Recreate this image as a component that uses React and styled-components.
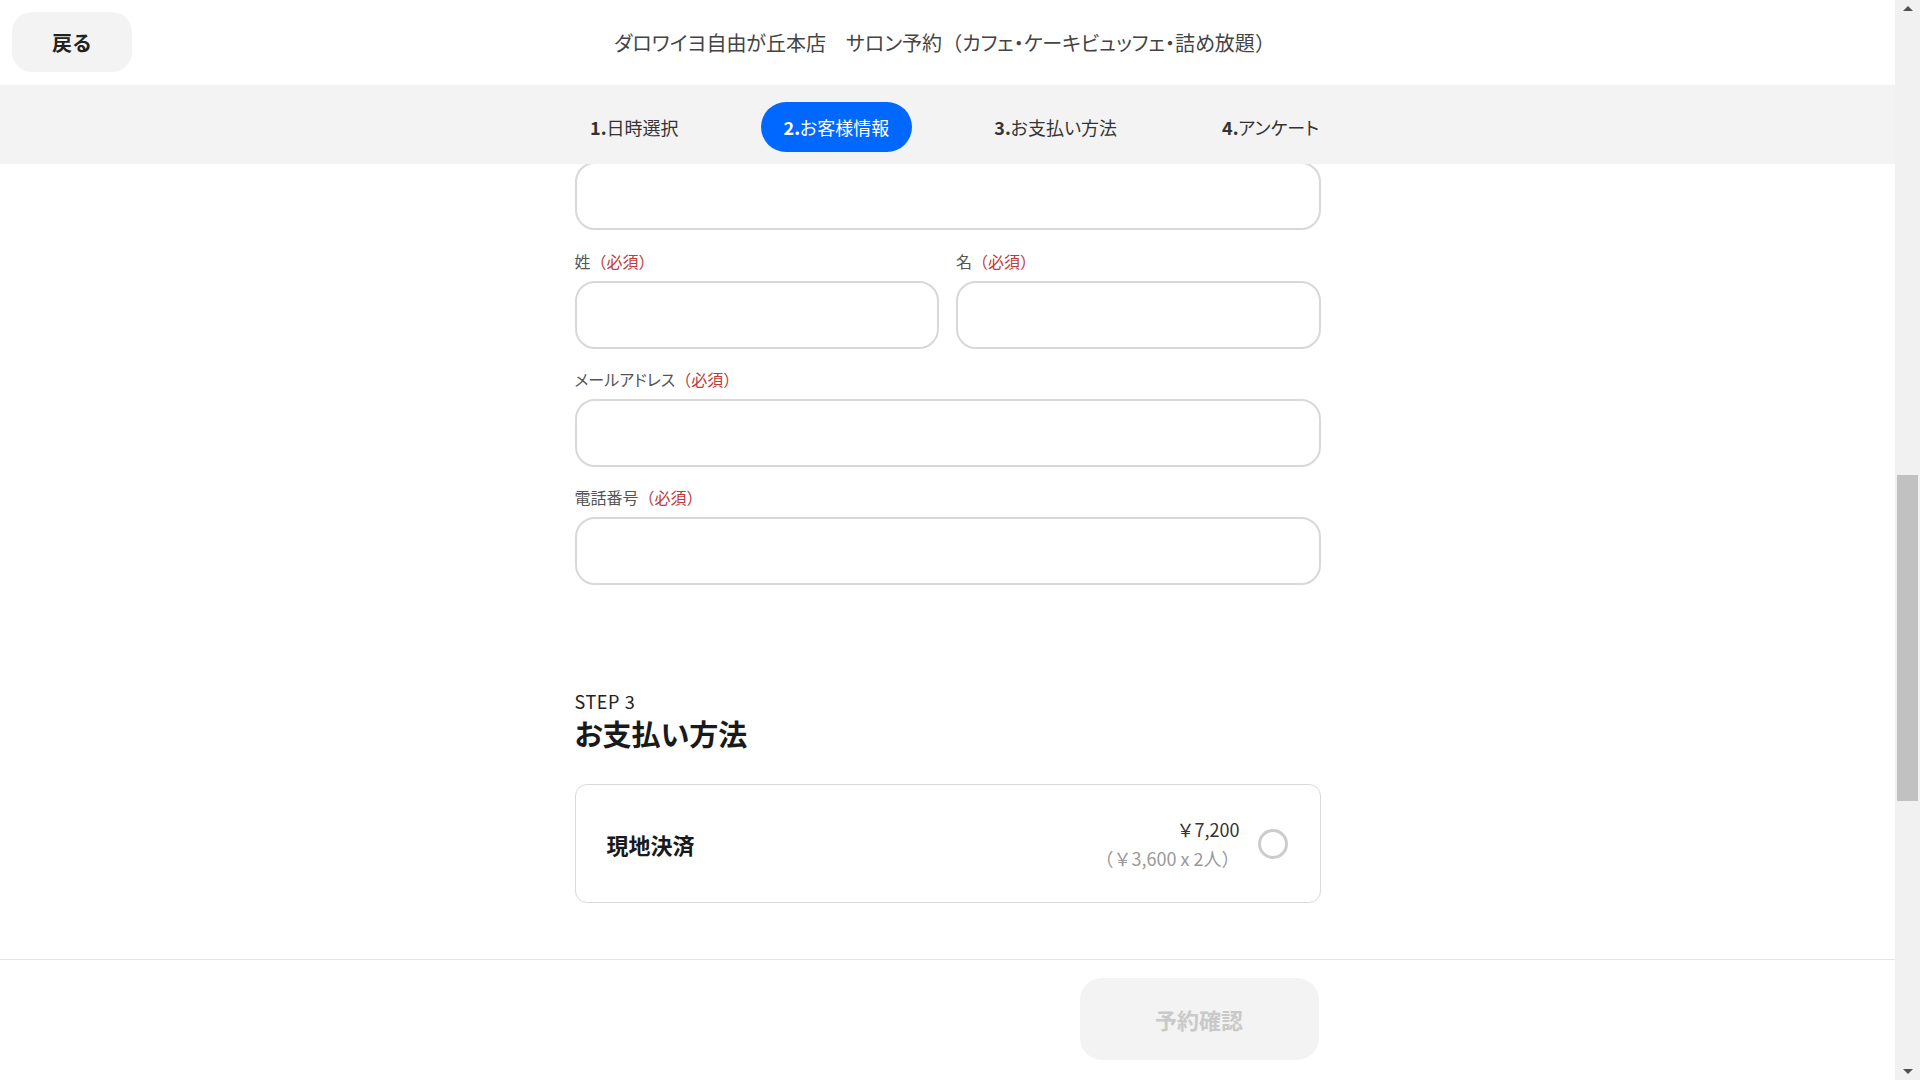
import React from "react";
import styled, { createGlobalStyle } from "styled-components";

const GlobalStyle = createGlobalStyle`
body {
  margin: 0;
  background: #fff;
  color: #333;
  font-family: "Noto Sans CJK JP", "Noto Sans", sans-serif;
  font-feature-settings: "palt";
}
* {
  box-sizing: border-box;
}
`;

const steps = [
  { no: "1.", label: "日時選択" },
  { no: "2.", label: "お客様情報", active: true },
  { no: "3.", label: "お支払い方法" },
  { no: "4.", label: "アンケート" },
];

function App() {
  return (
    <Root>
      <GlobalStyle />
      <Page>
        <TopBar>
          <Header>
            <BackButton>戻る</BackButton>
            <Title>
              ダロワイヨ自由が丘本店　サロン予約<Wide>（</Wide>カフェ・ケーキビュッフェ・詰め放題<Wide>）</Wide>
            </Title>
            <span />
          </Header>
          <StepNav>
            {steps.map((s) => (
              <Step key={s.no} $active={s.active}>
                <StepNo>{s.no}</StepNo>
                {s.label}
              </Step>
            ))}
          </StepNav>
        </TopBar>

        <Main>
          <Fields>
            <Input type="text" />
            <NameRow>
              <Field>
                <Label>
                  姓<Required>（必須）</Required>
                </Label>
                <Input type="text" />
              </Field>
              <Field>
                <Label>
                  名<Required>（必須）</Required>
                </Label>
                <Input type="text" />
              </Field>
            </NameRow>
            <Field>
              <Label>
                メールアドレス<Required>（必須）</Required>
              </Label>
              <Input type="email" />
            </Field>
            <Field>
              <Label>
                電話番号<Required>（必須）</Required>
              </Label>
              <Input type="tel" />
            </Field>
          </Fields>

          <Section>
            <StepCaption>STEP 3</StepCaption>
            <SectionTitle>お支払い方法</SectionTitle>
            <PayCard>
              <PayName>現地決済</PayName>
              <PayRight>
                <PriceBox>
                  <Price>￥7,200</Price>
                  <PriceSub>（￥3,600 x 2人）</PriceSub>
                </PriceBox>
                <Radio />
              </PayRight>
            </PayCard>
          </Section>
        </Main>

        <Footer>
          <FooterInner>
            <ConfirmButton disabled>予約確認</ConfirmButton>
          </FooterInner>
        </Footer>
      </Page>

      <ScrollBar>
        <ScrollArrow $up />
        <ScrollTrack>
          <ScrollThumb />
        </ScrollTrack>
        <ScrollArrow />
      </ScrollBar>
    </Root>
  );
}

const Root = styled.div`
height: 100vh;
display: flex;
overflow: hidden;
`;

const Page = styled.div`
flex: 1;
min-width: 0;
display: flex;
flex-direction: column;
`;

const TopBar = styled.div`
position: sticky;
top: 0;
z-index: 2;
`;

const Header = styled.header`
height: 85px;
padding: 12px;
display: grid;
grid-template-columns: 1fr auto 1fr;
align-items: center;
background: #fff;
`;

const BackButton = styled.button`
justify-self: start;
align-self: start;
width: 120px;
height: 60px;
border: none;
border-radius: 20px;
background: #f3f3f3;
color: #222;
font-family: inherit;
font-size: 20px;
font-weight: bold;
cursor: pointer;
`;

const Title = styled.h1`
margin: 0 0 0 -6px;
font-size: 20px;
font-weight: 400;
color: #444;
white-space: nowrap;
`;

const Wide = styled.span`
font-feature-settings: normal;
`;

const StepNav = styled.nav`
height: 79px;
padding: 17px 0 0 14px;
display: flex;
justify-content: center;
align-items: flex-start;
gap: 59px;
background: #f3f3f3;
`;

const Step = styled.div`
height: 50px;
padding: 0 23px;
border-radius: 25px;
display: flex;
align-items: center;
font-size: 18px;
color: ${(p) => (p.$active ? "#fff" : "#333")};
background: ${(p) => (p.$active ? "#0068ff" : "transparent")};
`;

const StepNo = styled.span`
font-weight: bold;
`;

const Main = styled.main`
width: 746px;
margin: -2px auto 0;
position: relative;
z-index: 1;
`;

const Fields = styled.div`
display: flex;
flex-direction: column;
gap: 18px;
`;

const NameRow = styled.div`
display: grid;
grid-template-columns: 1fr 1fr;
gap: 17px;
margin-top: 1px;
`;

const Field = styled.div`
display: flex;
flex-direction: column;
`;

const Label = styled.label`
font-size: 16px;
line-height: 24px;
color: #555;
margin-bottom: 8px;
`;

const Required = styled.span`
color: #c23a3a;
font-feature-settings: normal;
`;

const Input = styled.input`
width: 100%;
height: 68px;
border: 2px solid #d8d8d8;
border-radius: 20px;
background: #fff;
padding: 0 20px;
font-family: inherit;
font-size: 18px;
outline: none;
`;

const Section = styled.section`
margin-top: 104px;
`;

const StepCaption = styled.div`
font-size: 18px;
line-height: 24px;
letter-spacing: 0.6px;
color: #222;
`;

const SectionTitle = styled.h2`
margin: 0 0 31px;
font-size: 29px;
line-height: 40px;
font-weight: bold;
color: #1a1a1a;
`;

const PayCard = styled.div`
height: 119px;
padding: 0 32px 0 31px;
border: 1px solid #d9d9d9;
border-radius: 12px;
display: flex;
align-items: center;
justify-content: space-between;
`;

const PayName = styled.div`
font-size: 22px;
font-weight: bold;
color: #1a1a1a;
`;

const PayRight = styled.div`
display: flex;
align-items: center;
gap: 18px;
`;

const PriceBox = styled.div`
text-align: right;
font-feature-settings: normal;
`;

const Price = styled.div`
font-size: 18px;
line-height: 29px;
color: #333;
`;

const PriceSub = styled.div`
font-size: 18px;
line-height: 29px;
color: #999;
`;

const Radio = styled.span`
width: 30px;
height: 30px;
border: 3px solid #cccccc;
border-radius: 50%;
`;

const Footer = styled.footer`
margin-top: auto;
border-top: 1px solid #e6e6e6;
padding: 18px 0 20px;
background: #fff;
`;

const FooterInner = styled.div`
width: 746px;
margin: 0 auto;
display: flex;
justify-content: flex-end;
padding-right: 2px;
`;

const ConfirmButton = styled.button`
width: 239px;
height: 82px;
border: none;
border-radius: 22px;
background: #f3f3f3;
color: #c9c9c9;
font-family: inherit;
font-size: 22px;
font-weight: bold;
`;

const ScrollBar = styled.div`
width: 25px;
flex-shrink: 0;
display: flex;
flex-direction: column;
background: #f1f1f1;
`;

const ScrollArrow = styled.div`
height: 17px;
display: flex;
align-items: center;
justify-content: center;
&::before {
  content: "";
  border-left: 5px solid transparent;
  border-right: 5px solid transparent;
  ${(p) =>
    p.$up ? "border-bottom: 5px solid #505050;" : "border-top: 5px solid #505050;"}
}
`;

const ScrollTrack = styled.div`
flex: 1;
padding: 0 2px;
`;

const ScrollThumb = styled.div`
margin-top: 458px;
height: 326px;
background: #c1c1c1;
`;

export default App;
